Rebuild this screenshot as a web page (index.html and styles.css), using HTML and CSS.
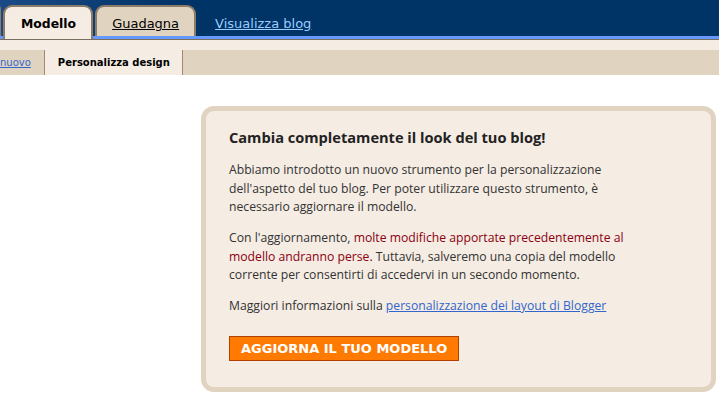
FILE: index.html
```html
<!DOCTYPE html>
<html lang="it">
<head>
  <meta charset="UTF-8">
  <title>Modello</title>
  <link rel="stylesheet" href="styles.css">
</head>
<body>
  <div class="header">
    <div class="tabs">
      <div class="tab tab-stub"></div>
      <div class="tab active">Modello</div>
      <div class="tab"><a href="#">Guadagna</a></div>
      <a class="view-blog" href="#">Visualizza blog</a>
    </div>
    <div class="tab-strip"></div>
  </div>

  <div class="subtabs">
    <div class="subtab"><a href="#">nuovo</a></div>
    <div class="subtab current">Personalizza design</div>
  </div>

  <div class="main">
    <div class="sidebar"></div>
    <div class="notice">
      <h3>Cambia completamente il look del tuo blog!</h3>
      <p>Abbiamo introdotto un nuovo strumento per la personalizzazione dell'aspetto del tuo blog. Per poter utilizzare questo strumento, è necessario aggiornare il modello.</p>
      <p>Con l'aggiornamento, <span class="warn">molte modifiche apportate precedentemente al modello andranno perse.</span> Tuttavia, salveremo una copia del modello corrente per consentirti di accedervi in un secondo momento.</p>
      <p>Maggiori informazioni sulla <a href="#">personalizzazione dei layout di Blogger</a></p>
      <button class="upgrade">Aggiorna il tuo modello</button>
    </div>
  </div>
</body>
</html>
```

FILE: styles.css
```css
body {
  margin: 0;
  background: #fff;
  font-family: "Open Sans", sans-serif;
  color: #333;
  overflow: hidden;
}

/* top navigation */
.header {
  background: linear-gradient(to right, #1b4a86, #003366 180px);
}

.tabs {
  height: 36px;
  display: flex;
  align-items: flex-end;
}

.tab {
  height: 22px;
  margin-right: 2px;
  padding: 7px 15px 0;
  background: #e0d4c0;
  border: 2px solid #8c7b66;
  border-bottom: none;
  border-radius: 9px 9px 0 0;
  font-family: "DejaVu Sans", sans-serif;
  font-size: 13px;
  line-height: 20px;
  color: #000;
}

.tab a {
  color: #000;
}

.tab-stub {
  width: 0;
  padding: 7px 0 0;
  margin-left: -3px;
  border-radius: 0 9px 0 0;
}

.tab.active {
  height: 25px;
  margin-bottom: -3px;
  background: #f5ede3;
  font-weight: bold;
  font-size: 12.4px;
  padding: 7px 15px 0 16px;
}

.view-blog {
  margin-left: 17px;
  padding-bottom: 5px;
  font-family: "DejaVu Sans", sans-serif;
  font-size: 13px;
  color: #99ccff;
}

.tab-strip {
  height: 3px;
  background: #6699ff;
  border-bottom: 1px solid #7a7060;
}

/* second-level tabs */
.subtabs {
  display: flex;
  background: #e0d4c0;
  border-top: 10px solid #f5ede3;
  height: 25px;
  font-family: "DejaVu Sans", sans-serif;
  font-size: 10px;
}

.subtab {
  display: flex;
  align-items: center;
  padding: 0 13px;
  border-right: 1px solid #a08a70;
}

.subtab:first-child {
  margin-left: -13px;
  padding-right: 13px;
}

.subtab a {
  color: #3366cc;
}

.subtab.current {
  background: #f5ede3;
  font-weight: bold;
  color: #000;
  padding: 0 12px 0 13px;
}

/* page body */
.main {
  display: flex;
  padding-top: 31px;
}

.sidebar {
  width: 201px;
  flex-shrink: 0;
}

.notice {
  width: 430px;
  padding: 17px 52px 26px 23px;
  background: #f5ece3;
  border: 5px solid #e0d4c0;
  border-radius: 13px;
  font-size: 12.2px;
  line-height: 18.5px;
}

.notice h3 {
  margin: 0 0 15px;
  font-size: 14.6px;
  line-height: 18px;
  font-weight: bold;
  color: #222;
}

.notice p {
  margin: 0 0 12.5px;
}

.notice .warn {
  color: #8b0010;
}

.notice a {
  color: #3366cc;
}

.upgrade {
  display: block;
  margin-top: 20px;
  padding: 0 11px;
  height: 25px;
  background: #ff7a00;
  border: 1px solid #b04000;
  color: #fff;
  font-family: "DejaVu Sans", sans-serif;
  font-size: 13px;
  font-weight: bold;
  text-transform: uppercase;
  cursor: pointer;
}
```
